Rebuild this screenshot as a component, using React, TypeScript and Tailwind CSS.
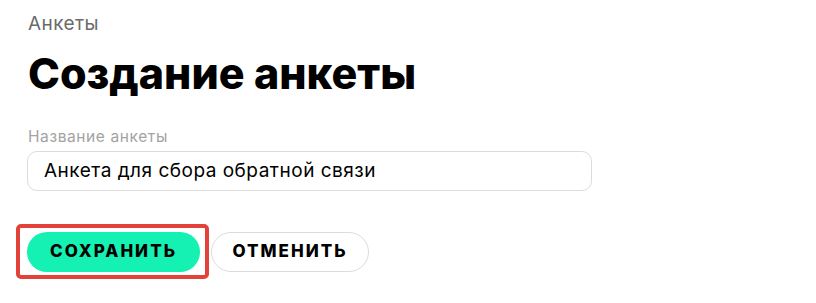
import React from "react";

export default function App() {
  return (
    <div className="w-[816px] h-[303px] bg-white font-['Inter',sans-serif] pl-[28px] pt-[12px]">
      <div className="text-[19px] leading-[24px] tracking-[0.4px] text-[#6b6b6b]">Анкеты</div>
      <h1 className="mt-[13px] text-[43px] leading-[48px] font-extrabold text-black">Создание анкеты</h1>
      <div className="mt-[30px] text-[15.5px] leading-[20px] tracking-[0.6px] text-[#a3a3a3]">Название анкеты</div>
      <div className="mt-[4px] w-[565px] h-[40px] -ml-[1px] rounded-[10px] border border-[#dcdcdc] flex items-center px-[16px] text-[19px] tracking-[0.5px] text-black">
        <span>Анкета для сбора обратной связи</span>
      </div>
      <div className="mt-[33px] flex items-start -ml-[12px]">
        <div className="rounded-[5px] border-[4px] border-[#e3423a] pt-[4px] pl-[7px] pr-[5px] pb-[3px]">
          <button className="h-[40px] w-[173px] rounded-full bg-[#14f1b2] text-[17px] font-extrabold tracking-[2px] text-black">
            СОХРАНИТЬ
          </button>
        </div>
        <button className="ml-[2px] mt-[8px] h-[40px] w-[158px] rounded-full border border-[#dcdcdc] bg-white text-[17px] font-extrabold tracking-[2px] text-black">
          ОТМЕНИТЬ
        </button>
      </div>
    </div>
  );
}
